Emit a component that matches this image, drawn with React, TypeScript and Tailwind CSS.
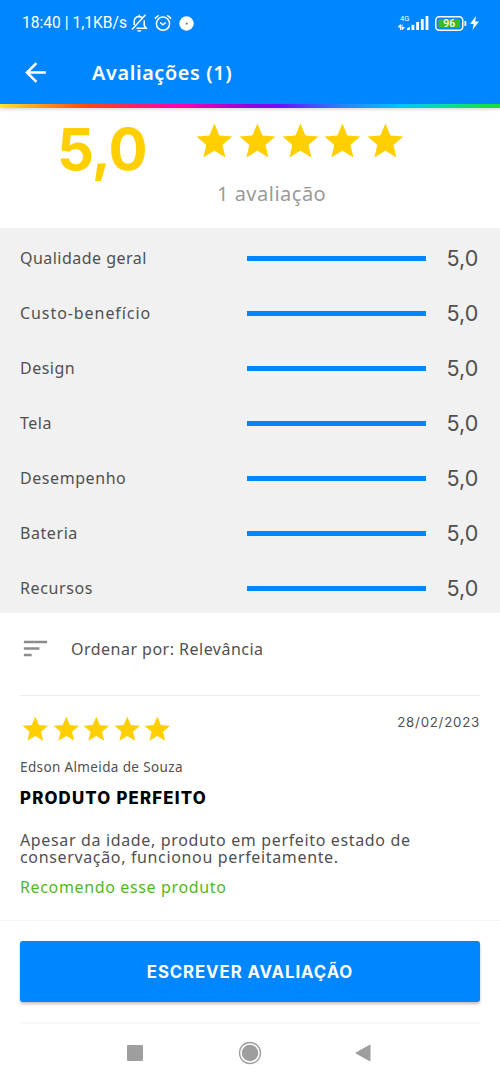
import { clsx } from 'clsx';

const STAR_PATH =
  'M12 17.27L18.18 21l-1.64-7.03L22 9.24l-7.19-.61L12 2 9.19 8.63 2 9.24l5.46 4.73L5.82 21z';

const criteria = [
  { name: 'Qualidade geral', score: 5, tracking: 'tracking-[0.47px]' },
  { name: 'Custo-benefício', score: 5, tracking: 'tracking-[0.93px]' },
  { name: 'Design', score: 5, tracking: 'tracking-[0.5px]' },
  { name: 'Tela', score: 5, tracking: 'tracking-[0.5px]' },
  { name: 'Desempenho', score: 5, tracking: 'tracking-[0.57px]' },
  { name: 'Bateria', score: 5, tracking: 'tracking-[0.57px]' },
  { name: 'Recursos', score: 5, tracking: 'tracking-[0.6px]' },
];

const formatScore = (score: number) => score.toFixed(1).replace('.', ',');

const Stars = ({ className }: { className: string }) => (
  <div className="flex text-[#ffcf00]">
    {[1, 2, 3, 4, 5].map((n) => (
      <svg
        key={n}
        viewBox="0 0 24 24"
        fill="currentColor"
        className={clsx('shrink-0', className)}
      >
        <path d={STAR_PATH} />
      </svg>
    ))}
  </div>
);

const StatusBar = () => (
  <div className="flex h-[46px] items-center pl-[22px] pr-[21px] text-white">
    <span className="w-[109px] whitespace-nowrap pt-[2px] font-['Roboto',sans-serif] text-[15.6px] leading-none">
      18:40 | 1,1KB/s
    </span>
    {/* Muted bell */}
    <svg
      className="h-[18px] w-[17px] shrink-0"
      viewBox="0 0 17 18"
      fill="none"
      stroke="currentColor"
      strokeWidth="1.5"
    >
      <path d="M3.2 11V7.3C3.2 4.5 5 2.7 8 2.4c1.2 0 2.2.4 3 1M13.2 6.3v5.2l2 2.8H5.5M1 15.5L14.5.8M8.2 2.2V.8" />
      <path d="M6 16.2h4.5c-.4 1-1.2 1.5-2.2 1.5S6.4 17.2 6 16.2z" fill="currentColor" stroke="none" />
    </svg>
    {/* Alarm clock */}
    <svg
      className="ml-[6px] h-[18px] w-[18px] shrink-0"
      viewBox="0 0 18 18"
      fill="none"
      stroke="currentColor"
      strokeWidth="1.5"
    >
      <circle cx="9" cy="9.7" r="6.6" />
      <path d="M.8 4.6L4.8 1.2M17.2 4.6l-4-3.4M6.2 8.5L8.8 10.8l3-2.3" />
    </svg>
    <svg className="ml-[7px] h-[15px] w-[15px] shrink-0" viewBox="0 0 15 15">
      <circle cx="7.5" cy="7.5" r="7.2" fill="#fff" />
      <path d="M6.8 6l2.4 1.7-2.4 1.3z" fill="#777" />
    </svg>
    {/* Mobile signal */}
    <svg
      className="ml-auto h-[17px] w-[31px] shrink-0"
      viewBox="0 0 31 17"
      fill="currentColor"
    >
      <text x="2" y="5.6" fontSize="7.5" fontFamily="Roboto, sans-serif">
        4G
      </text>
      <path d="M-.5 12.4L2 9.500h1V15H2v-2.600zM7 12.100L4.500 15h-1V9.500h1v2.600z" />
      <path d="M9 13.500l2.800-1.700V15H9z" />
      <rect x="13.5" y="9.8" width="2.8" height="5.2" />
      <rect x="18.2" y="7" width="2.8" height="8" />
      <rect x="22.9" y="4" width="2.8" height="11" />
      <rect x="27.6" y="1" width="2.8" height="14" />
    </svg>
    {/* Battery */}
    <svg className="ml-[6px] h-[15px] w-[32px] shrink-0" viewBox="0 0 32 15">
      <rect x=".75" y=".75" width="27" height="13.5" rx="3.5" fill="none" stroke="#fff" strokeWidth="1.5" />
      <rect x="3.5" y="3.5" width="21.5" height="8" fill="#43b820" />
      <rect x="29.5" y="5" width="1.8" height="5" rx=".6" fill="#fff" />
      <text
        x="14.3"
        y="11.2"
        textAnchor="middle"
        fontSize="10.5"
        fontWeight="500"
        fill="#fff"
        fontFamily="Roboto, sans-serif"
      >
        96
      </text>
    </svg>
    <svg
      className="ml-[3px] h-[14px] w-[9px] shrink-0"
      viewBox="0 0 9 14"
      fill="currentColor"
    >
      <path d="M6 0L0 8h3.6L2.5 14 9 5.6H5.2z" />
    </svg>
  </div>
);

const App = () => {
  return (
    <div className="flex h-[1083px] w-[500px] flex-col overflow-hidden bg-white font-['Noto_Sans',sans-serif] text-[#505050]">
      {/* Header */}
      <header className="relative shrink-0 bg-[#0086ff] shadow-[0_1px_4px_rgba(0,0,0,0.2)]">
        <StatusBar />
        <div className="flex h-[58px] items-start pl-5 text-white">
          <button className="mt-[11px]" aria-label="Voltar">
            <svg viewBox="0 0 24 24" fill="currentColor" className="size-[31px]">
              <path d="M20 11H7.83l5.59-5.59L12 4l-8 8 8 8 1.41-1.41L7.83 13H20v-2z" />
            </svg>
          </button>
          <h1 className="ml-[41px] mt-[13px] whitespace-nowrap text-[19.8px] font-semibold leading-7 tracking-[0.65px]">
            Avaliações (1)
          </h1>
        </div>
        <div className="h-1 bg-[linear-gradient(90deg,#ffe62e_0%,#ff9a1a_8%,#ff4a0a_17%,#f81c70_28%,#f800b4_37%,#9a00d8_49%,#6a10ff_56%,#2a80f8_68%,#00c4ff_80%,#08dca0_89%,#18e030_100%)]" />
      </header>

      {/* Overall score */}
      <section className="flex h-[120px] shrink-0">
        <div className="w-[193px] pl-[57px] pt-[11px] font-['Inter',sans-serif] text-[58px] font-bold leading-[60px] tracking-[-1px] text-[#ffcf00]">
          5,0
        </div>
        <div className="pt-[11.6px]">
          <Stars className="size-[42.8px]" />
          <p className="mt-[18px] pl-6 text-xl leading-7 tracking-[0.5px] text-[#999]">
            1 avaliação
          </p>
        </div>
      </section>

      {/* Score per criterion */}
      <section className="shrink-0 bg-[#f1f1f1]">
        {criteria.map((item) => (
          <div key={item.name} className="flex h-[55px] items-center pl-5 pt-[5px]">
            <span className={clsx('w-[227px] text-base', item.tracking)}>
              {item.name}
            </span>
            <div className="h-[5px] w-[178.5px]">
              <div
                className="h-full bg-[#0086ff]"
                style={{ width: `${(item.score / 5) * 100}%` }}
              />
            </div>
            <span className="ml-[21px] font-['Inter',sans-serif] text-[21.5px] leading-7">
              {formatScore(item.score)}
            </span>
          </div>
        ))}
      </section>

      {/* Sorting */}
      <div className="mx-5 flex h-[83px] shrink-0 items-start border-b border-[#ebebeb] pt-5">
        <svg viewBox="0 0 24 24" fill="#8c8c8c" className="size-[31px]">
          <path d="M3 18h6v-2H3v2zM3 6v2h18V6H3zm0 7h12v-2H3v2z" />
        </svg>
        <span className="ml-5 mt-1 text-base leading-6 tracking-[0.48px]">
          Ordenar por: Relevância
        </span>
      </div>

      {/* Review */}
      <article className="h-[225px] shrink-0 border-b border-[#f5f5f5] px-5">
        <div className="flex justify-between pt-[18px]">
          <Stars className="size-[30.6px]" />
          <time className="font-['Inter',sans-serif] text-[13.3px] leading-4 tracking-[0.75px]">
            28/02/2023
          </time>
        </div>
        <p className="mt-[14px] text-[13.5px] leading-4 tracking-[0.37px]">
          Edson Almeida de Souza
        </p>
        <h2 className="mt-[11px] font-['Inter',sans-serif] text-[16.8px] font-extrabold leading-6 tracking-[1.2px] text-black">
          PRODUTO PERFEITO
        </h2>
        <p className="mt-[22px] whitespace-nowrap text-base leading-[17px] tracking-[0.65px]">
          Apesar da idade, produto em perfeito estado de
          <br />
          conservação, funcionou perfeitamente.
        </p>
        <p className="mt-[9px] text-base leading-6 tracking-[0.64px] text-[#52b820]">
          Recomendo esse produto
        </p>
      </article>

      {/* Write a review */}
      <div className="mx-5 h-[103px] shrink-0 border-b-2 border-[#f7f7f7] pt-5">
        <button className="h-[61px] w-full rounded-[3px] bg-[#0086ff] pt-0.5 font-['Inter',sans-serif] text-[16.8px] font-bold tracking-[0.9px] text-white shadow-[0_2px_3px_rgba(0,0,0,0.25)]">
          ESCREVER AVALIAÇÃO
        </button>
      </div>

      {/* Android navigation */}
      <nav className="flex h-[58px] shrink-0 items-center text-[#9e9e9e]">
        <div className="ml-[127px] size-4 rounded-[1px] bg-[#9e9e9e]" />
        <svg viewBox="0 0 24 24" className="ml-[95px] size-6">
          <circle cx="12" cy="12" r="10.5" fill="none" stroke="currentColor" strokeWidth="1.3" />
          <circle cx="12" cy="12" r="8.3" fill="currentColor" />
        </svg>
        <svg viewBox="0 0 16 18" fill="currentColor" className="ml-[93px] h-[18px] w-4">
          <path d="M15.5 1.2v15.6c0 .5-.4.6-.8.4L.8 9.5c-.4-.3-.4-.7 0-1L14.7.8c.4-.2.8-.1.8.4z" />
        </svg>
      </nav>
    </div>
  );
};

export default App;
